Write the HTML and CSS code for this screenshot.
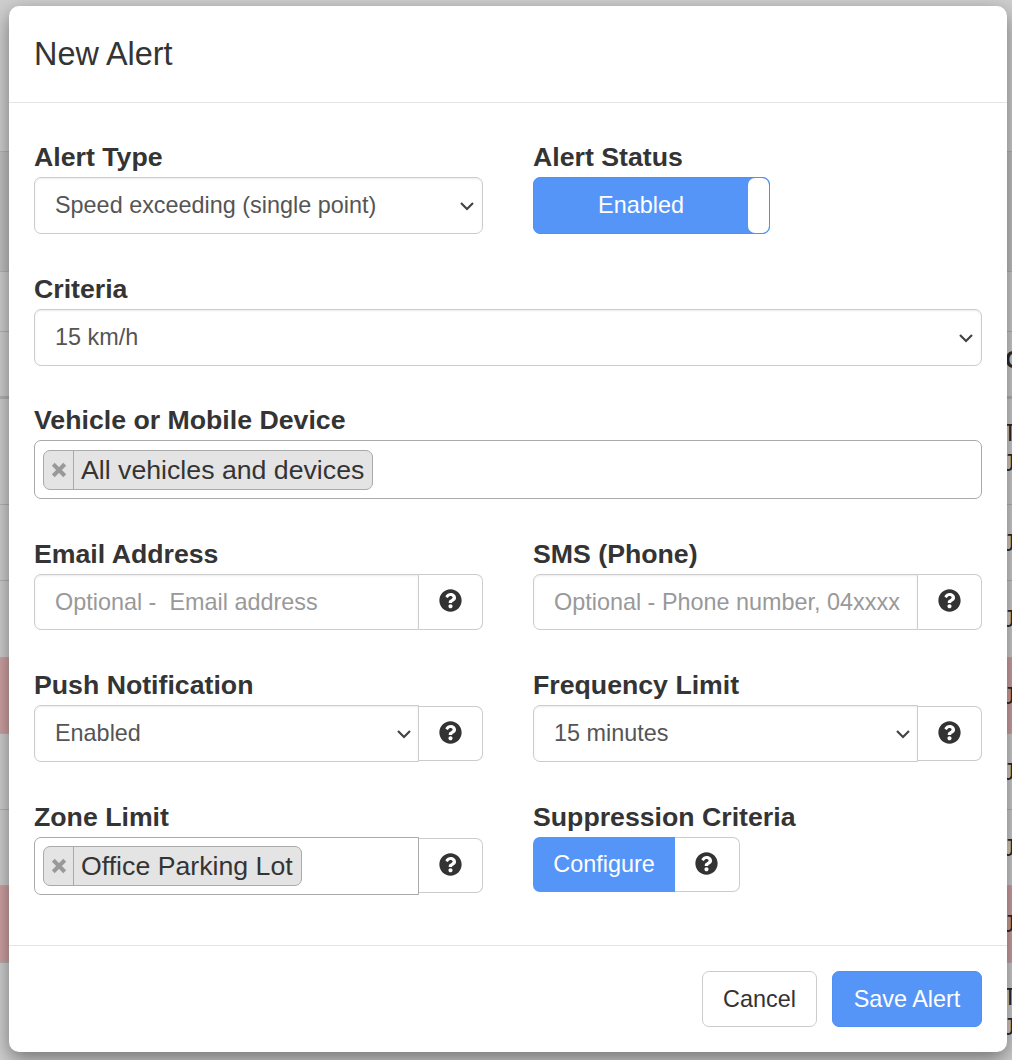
FILE: index.html
```html
<!DOCTYPE html>
<html lang="en">
<head>
  <meta charset="UTF-8">
  <title>New Alert</title>
  <link rel="stylesheet" href="styles.css">
</head>
<body>
  <!-- page behind the modal, only the edges show -->
  <div class="page-rows">
    <div class="row row-top"></div>
    <div class="row row-head"></div>
    <div class="row row-a"></div>
    <div class="row row-b"><span class="cell-head">C</span></div>
    <div class="row row-c">T<br>J</div>
    <div class="row row-d">J</div>
    <div class="row row-d">J</div>
    <div class="row row-d row-red">J</div>
    <div class="row row-d">J</div>
    <div class="row row-d">J</div>
    <div class="row row-d row-red">J</div>
    <div class="row row-c">T<br>J</div>
  </div>

  <div class="modal">
    <div class="modal-header">
      <h5 class="modal-title">New Alert</h5>
    </div>

    <div class="modal-body">
      <div class="form-row">
        <div class="form-group">
          <label>Alert Type</label>
          <div class="select">
            <span>Speed exceeding (single point)</span>
            <svg class="chevron" viewBox="0 0 16 16"><path d="M2 5l6 6 6-6"/></svg>
          </div>
        </div>
        <div class="form-group">
          <label>Alert Status</label>
          <div class="toggle">
            <span class="toggle-on">Enabled</span>
            <span class="toggle-handle"></span>
          </div>
        </div>
      </div>

      <div class="form-group group-tight">
        <label>Criteria</label>
        <div class="select">
          <span>15 km/h</span>
          <svg class="chevron" viewBox="0 0 16 16"><path d="M2 5l6 6 6-6"/></svg>
        </div>
      </div>

      <div class="form-group">
        <label>Vehicle or Mobile Device</label>
        <div class="tag-box">
          <span class="tag">
            <span class="tag-x"><svg viewBox="0 0 14 14"><path d="M2 2l10 10M12 2L2 12"/></svg></span>
            <span class="tag-text">All vehicles and devices</span>
          </span>
        </div>
      </div>

      <div class="form-row">
        <div class="form-group">
          <label>Email Address</label>
          <div class="input-group">
            <div class="input placeholder">Optional -&nbsp; Email address</div>
            <div class="help">
              <svg class="help-icon" viewBox="0 0 512 512"><path d="M504 256c0 137-111 248-248 248S8 393 8 256 119 8 256 8s248 111 248 248zM262.700 90c-54.500 0-89.300 23-116.600 63.800-3.500 5.300-2.400 12.400 2.700 16.300l34.700 26.300c5.200 3.900 12.600 3 16.700-2.100 17.900-22.700 30.100-35.800 57.300-35.800 20.400 0 45.700 13.100 45.700 32.900 0 15-12.400 22.700-32.500 34-23.500 13.200-54.600 29.600-54.600 70.600V300c0 6.600 5.400 12 12 12h56c6.600 0 12-5.400 12-12v-1.300c0-28.400 83-29.600 83-106.700 0-58.100-60.200-102-116.400-102zM256 338c-25.400 0-46 20.600-46 46 0 25.400 20.600 46 46 46s46-20.600 46-46c0-25.400-20.600-46-46-46z"/></svg>
            </div>
          </div>
        </div>
        <div class="form-group">
          <label>SMS (Phone)</label>
          <div class="input-group">
            <div class="input placeholder">Optional - Phone number, 04xxxx</div>
            <div class="help">
              <svg class="help-icon" viewBox="0 0 512 512"><path d="M504 256c0 137-111 248-248 248S8 393 8 256 119 8 256 8s248 111 248 248zM262.700 90c-54.500 0-89.300 23-116.600 63.800-3.500 5.300-2.400 12.400 2.700 16.300l34.700 26.300c5.200 3.900 12.600 3 16.700-2.100 17.900-22.700 30.100-35.800 57.300-35.800 20.400 0 45.700 13.100 45.700 32.900 0 15-12.400 22.700-32.500 34-23.500 13.200-54.600 29.600-54.600 70.600V300c0 6.600 5.400 12 12 12h56c6.600 0 12-5.400 12-12v-1.300c0-28.400 83-29.600 83-106.700 0-58.100-60.200-102-116.400-102zM256 338c-25.400 0-46 20.600-46 46 0 25.400 20.600 46 46 46s46-20.600 46-46c0-25.400-20.600-46-46-46z"/></svg>
            </div>
          </div>
        </div>
      </div>

      <div class="form-row">
        <div class="form-group">
          <label>Push Notification</label>
          <div class="input-group">
            <div class="select select-joined">
              <span>Enabled</span>
              <svg class="chevron" viewBox="0 0 16 16"><path d="M2 5l6 6 6-6"/></svg>
            </div>
            <div class="help help-short">
              <svg class="help-icon" viewBox="0 0 512 512"><path d="M504 256c0 137-111 248-248 248S8 393 8 256 119 8 256 8s248 111 248 248zM262.700 90c-54.500 0-89.300 23-116.600 63.800-3.500 5.300-2.400 12.400 2.700 16.300l34.700 26.300c5.200 3.900 12.600 3 16.700-2.100 17.900-22.700 30.100-35.800 57.300-35.800 20.400 0 45.700 13.100 45.700 32.900 0 15-12.400 22.700-32.500 34-23.500 13.200-54.600 29.600-54.600 70.600V300c0 6.600 5.400 12 12 12h56c6.600 0 12-5.400 12-12v-1.300c0-28.400 83-29.600 83-106.700 0-58.100-60.200-102-116.400-102zM256 338c-25.400 0-46 20.600-46 46 0 25.400 20.600 46 46 46s46-20.600 46-46c0-25.400-20.600-46-46-46z"/></svg>
            </div>
          </div>
        </div>
        <div class="form-group">
          <label>Frequency Limit</label>
          <div class="input-group">
            <div class="select select-joined">
              <span>15 minutes</span>
              <svg class="chevron" viewBox="0 0 16 16"><path d="M2 5l6 6 6-6"/></svg>
            </div>
            <div class="help help-short">
              <svg class="help-icon" viewBox="0 0 512 512"><path d="M504 256c0 137-111 248-248 248S8 393 8 256 119 8 256 8s248 111 248 248zM262.700 90c-54.500 0-89.300 23-116.600 63.800-3.500 5.300-2.400 12.400 2.700 16.300l34.700 26.300c5.200 3.900 12.600 3 16.700-2.100 17.900-22.700 30.100-35.800 57.300-35.800 20.400 0 45.700 13.100 45.700 32.900 0 15-12.400 22.700-32.500 34-23.500 13.200-54.600 29.600-54.600 70.600V300c0 6.600 5.400 12 12 12h56c6.600 0 12-5.400 12-12v-1.300c0-28.400 83-29.600 83-106.700 0-58.100-60.200-102-116.400-102zM256 338c-25.400 0-46 20.600-46 46 0 25.400 20.600 46 46 46s46-20.600 46-46c0-25.400-20.600-46-46-46z"/></svg>
            </div>
          </div>
        </div>
      </div>

      <div class="form-row">
        <div class="form-group">
          <label>Zone Limit</label>
          <div class="input-group">
            <div class="tag-box tag-box-joined">
              <span class="tag">
                <span class="tag-x"><svg viewBox="0 0 14 14"><path d="M2 2l10 10M12 2L2 12"/></svg></span>
                <span class="tag-text">Office Parking Lot</span>
              </span>
            </div>
            <div class="help help-short">
              <svg class="help-icon" viewBox="0 0 512 512"><path d="M504 256c0 137-111 248-248 248S8 393 8 256 119 8 256 8s248 111 248 248zM262.700 90c-54.500 0-89.300 23-116.600 63.800-3.500 5.300-2.400 12.400 2.700 16.300l34.700 26.300c5.200 3.900 12.600 3 16.700-2.100 17.900-22.700 30.100-35.800 57.300-35.800 20.400 0 45.700 13.100 45.700 32.900 0 15-12.400 22.700-32.500 34-23.500 13.200-54.600 29.600-54.600 70.600V300c0 6.600 5.400 12 12 12h56c6.600 0 12-5.400 12-12v-1.300c0-28.400 83-29.600 83-106.700 0-58.100-60.200-102-116.400-102zM256 338c-25.400 0-46 20.600-46 46 0 25.400 20.600 46 46 46s46-20.600 46-46c0-25.400-20.600-46-46-46z"/></svg>
            </div>
          </div>
        </div>
        <div class="form-group">
          <label>Suppression Criteria</label>
          <div class="configure">
            <span class="configure-btn">Configure</span>
            <div class="help">
              <svg class="help-icon" viewBox="0 0 512 512"><path d="M504 256c0 137-111 248-248 248S8 393 8 256 119 8 256 8s248 111 248 248zM262.700 90c-54.500 0-89.300 23-116.600 63.800-3.500 5.300-2.400 12.400 2.700 16.300l34.700 26.300c5.200 3.900 12.600 3 16.700-2.100 17.900-22.700 30.100-35.800 57.300-35.800 20.400 0 45.700 13.100 45.700 32.900 0 15-12.400 22.700-32.500 34-23.500 13.200-54.600 29.600-54.600 70.600V300c0 6.600 5.400 12 12 12h56c6.600 0 12-5.400 12-12v-1.300c0-28.400 83-29.600 83-106.700 0-58.100-60.200-102-116.400-102zM256 338c-25.400 0-46 20.600-46 46 0 25.400 20.600 46 46 46s46-20.600 46-46c0-25.400-20.600-46-46-46z"/></svg>
            </div>
          </div>
        </div>
      </div>
    </div>

    <div class="modal-footer">
      <button class="btn btn-cancel">Cancel</button>
      <button class="btn btn-save">Save Alert</button>
    </div>
  </div>
</body>
</html>
```

FILE: styles.css
```css
html, body {
  margin: 0;
  height: 1060px;
  overflow: hidden;
}

body {
  font-family: "Liberation Sans", Arial, sans-serif;
  color: #343434;
  background-color: #cfcfcf;
}

/* rows of the table behind the modal */
.row {
  box-sizing: border-box;
  border-bottom: 1px solid #b4b4b4;
  padding-left: 1003px;
  font-size: 23.400px;
  line-height: 28px;
  white-space: nowrap;
  overflow: hidden;
  color: #2a2a2a;
}

.row-top {
  height: 151px;
  border-bottom: 0;
}

.row-head {
  height: 121px;
  background-color: #c2c2c2;
  border-top: 1px solid #b4b4b4;
}

.row-a {
  height: 60px;
}

.row-b {
  height: 67px;
  padding-top: 14px;
  padding-left: 1005px;
  border-bottom: 3px solid #b4b4b4;
}

.cell-head {
  font-weight: 700;
}

.row-c {
  height: 106px;
  padding-top: 19px;
  line-height: 30px;
}

.row-d {
  height: 76.250px;
  padding-top: 24px;
}

.row-red {
  background-color: #cfa2a4;
}

.modal {
  position: absolute;
  top: 6px;
  left: 9px;
  width: 998px;
  height: 1046px;
  box-sizing: border-box;
  background-color: #fff;
  border-radius: 10px;
  box-shadow: 0 7px 20px rgba(0, 0, 0, 0.45);
}

.modal-header {
  height: 97px;
  box-sizing: border-box;
  border-bottom: 1px solid #e5e5e5;
  padding: 27px 25px 0;
}

.modal-title {
  margin: 0;
  font-size: 32.400px;
  font-weight: 400;
  line-height: 42px;
}

.modal-body {
  padding: 40px 25px 0;
  height: 843px;
  box-sizing: border-box;
  border-bottom: 1px solid #e5e5e5;
}

.form-row {
  display: grid;
  grid-template-columns: 449px 449px;
  column-gap: 50px;
}

.form-group {
  margin-bottom: 41px;
}

.group-tight {
  margin-bottom: 40px;
}

label {
  display: block;
  font-size: 26.700px;
  font-weight: 700;
  line-height: 28px;
  margin-bottom: 6px;
}

.select {
  display: flex;
  align-items: center;
  justify-content: space-between;
  height: 57px;
  box-sizing: border-box;
  padding: 0 7px 0 20px;
  border: 1px solid #ccc;
  border-radius: 7px;
  font-size: 23.400px;
  color: #555;
  box-shadow: inset 0 1px 2px rgba(0, 0, 0, 0.08);
}

.select-joined {
  flex: 1;
  padding-right: 6px;
  border-radius: 7px 0 0 7px;
}

.chevron {
  width: 16px;
  height: 16px;
  fill: none;
  stroke: #444;
  stroke-width: 2.200;
}

.toggle {
  display: flex;
  width: 237px;
  height: 57px;
  box-sizing: border-box;
  border: 1px solid #5091ee;
  border-radius: 7px;
  overflow: hidden;
  background-color: #5595f7;
}

.toggle-on {
  flex: 1;
  text-align: center;
  color: #fff;
  font-size: 23.400px;
  line-height: 54px;
}

.toggle-handle {
  width: 21px;
  background-color: #fff;
  border-radius: 7px;
}

.tag-box {
  height: 59px;
  box-sizing: border-box;
  padding: 9px 8px;
  border: 1px solid #aaa;
  border-radius: 7px;
}

.tag-box-joined {
  flex: 1;
  height: 58px;
  padding-top: 8px;
  border-radius: 7px 0 0 7px;
}

.tag {
  display: inline-flex;
  height: 40px;
  box-sizing: border-box;
  border: 1px solid #aaa;
  border-radius: 7px;
  background-color: #e4e4e4;
  font-size: 26.700px;
  line-height: 38px;
}

.tag-x {
  display: flex;
  align-items: center;
  justify-content: center;
  width: 29px;
  border-right: 1px solid #aaa;
}

.tag-x svg {
  width: 16px;
  height: 16px;
  fill: none;
  stroke: #999;
  stroke-width: 3.500;
}

.tag-text {
  padding: 0 8px 0 7px;
}

.input-group {
  display: flex;
  align-items: flex-start;
}

.input {
  flex: 1;
  min-width: 0;
  height: 56px;
  box-sizing: border-box;
  padding-left: 20px;
  border: 1px solid #ccc;
  border-radius: 7px 0 0 7px;
  font-size: 23.400px;
  line-height: 54px;
  white-space: nowrap;
  overflow: hidden;
  box-shadow: inset 0 1px 2px rgba(0, 0, 0, 0.08);
}

.placeholder {
  color: #999;
}

.help {
  display: flex;
  align-items: center;
  justify-content: center;
  width: 64px;
  height: 56px;
  box-sizing: border-box;
  border: 1px solid #ccc;
  border-left: 0;
  border-radius: 0 7px 7px 0;
  background-color: #fff;
}

.help-short {
  height: 55px;
  margin-top: 1px;
}

.help-icon {
  width: 23px;
  height: 23px;
  fill: #333;
  margin: -3px 1px 0 0;
}

.configure {
  display: flex;
}

.configure-btn {
  width: 142px;
  height: 55px;
  background-color: #5595f7;
  border-radius: 7px 0 0 7px;
  color: #fff;
  font-size: 23.400px;
  line-height: 54px;
  text-align: center;
}

.configure .help {
  width: 65px;
  height: 55px;
}

.modal-footer {
  display: flex;
  justify-content: flex-end;
  gap: 15px;
  padding: 25px 25px 0;
}

.btn {
  height: 56px;
  box-sizing: border-box;
  border-radius: 7px;
  font-family: inherit;
  font-size: 23.400px;
  padding: 0;
}

.btn-cancel {
  width: 115px;
  background-color: #fff;
  border: 1px solid #ccc;
  color: #333;
}

.btn-save {
  width: 150px;
  background-color: #5595f7;
  border: 1px solid #4f90f0;
  color: #fff;
}
```
